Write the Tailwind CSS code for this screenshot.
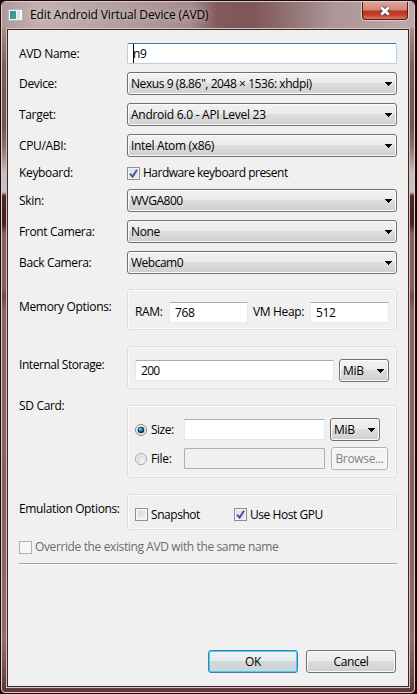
<!DOCTYPE html>
<html lang="en">
<head>
<meta charset="utf-8">
<title>Edit Android Virtual Device (AVD)</title>
<script src="https://cdn.jsdelivr.net/npm/@tailwindcss/browser@4"></script>
</head>
<body class="bg-[#0c0606] overflow-hidden">
<svg class="hidden">
  <symbol id="arrow" viewBox="0 0 7 4"><path d="M0 0h7v1H6v1H5v1H4v1H3V3H2V2H1V1H0z" fill="#000" shape-rendering="crispEdges"/></symbol>
  <symbol id="check" viewBox="0 0 9 9"><path d="M1 4.6 3.6 7.6 8 .8" fill="none" stroke="#42589b" stroke-width="2"/></symbol>
</svg>
<div class="w-[416px] h-[694px] rounded-t-[6px] rounded-b-[5px] border border-[#1c0b0b] bg-[#875f5f] overflow-hidden font-['Open_Sans','Noto_Sans',sans-serif] text-[12px] leading-4 tracking-[-0.33px] text-black whitespace-nowrap">
 <div class="h-full rounded-t-[5px] rounded-b-[4px] border border-[#dccaca] px-1 pb-1 flex flex-col bg-[linear-gradient(180deg,#b79fa0_0px,#a28a8b_30px,#7d5c5c_65px,#745452_125px,#8c7071_145px,#c9bcbc_170px,#cdc0c0_190px,#4a2524_194px,#49201f_222px,#85605f_232px,#875f5f_285px,#70494a_294px,#8a6565_310px,#875f5f_500px,#926b6b_640px,#5f3938_688px)]">
  <header class="h-[26px] -mx-1 pl-[6px] pr-[5px] flex justify-between shrink-0 bg-[linear-gradient(90deg,#b29999_0px,#c3b1b1_40px,#b39d9d_120px,#a68d8d_188px,#825a5b_215px,#805658_250px,#8e6c6d_280px,#ab9596_330px,#bda9aa_410px)]">
   <div class="flex items-start">
    <svg class="mt-[7px]" width="15" height="12" viewBox="0 0 15 12"><defs><linearGradient id="ic" x2="1" y2="1"><stop stop-color="#497fa8"/><stop offset="1" stop-color="#48a880"/></linearGradient></defs><rect x=".5" y=".5" width="14" height="11" fill="#f4f6f7" stroke="#a9b8c2"/><rect x="2" y="2" width="6" height="8" fill="url(#ic)"/><rect x="9" y="2" width="3" height="8" fill="#d9e4e1"/></svg>
    <span class="mt-[5px] ml-[7px] text-[12px] tracking-[-0.12px] [text-shadow:0_0_6px_#ffffffaa]">Edit Android Virtual Device (AVD)</span>
   </div>
   <div class="w-[48px] h-[19px] border border-t-0 border-[#e6c9c6] rounded-b-[5px]">
    <div class="h-full border border-t-0 border-[#501b18] rounded-b-[4px] flex justify-center items-center bg-[linear-gradient(180deg,#dca49a_0,#d18576_48%,#b93520_52%,#c43c25_75%,#dd7961_100%)]">
     <svg width="12" height="10" viewBox="0 0 12 10"><path d="M2.4 1.6 9.6 8.4M9.6 1.6 2.4 8.4" stroke="#4b4858" stroke-width="4.4"/><path d="M2.3 1.5 9.7 8.5M9.7 1.5 2.3 8.5" stroke="#fff" stroke-width="2.6"/></svg>
    </div>
   </div>
  </header>
  <div class="flex-1 border border-[#d5c4c4]">
   <main class="h-full border border-[#3a2424] bg-[#f0f0f0] pl-[11px] pr-[11px] pt-[13px] flex flex-col">
    <div class="flex h-[21px] items-center shrink-0"><span class="w-[108px]">AVD Name:</span><div class="w-[270px] h-[21px] rounded-[2px] border border-[#b5cfe7] border-t-[#3d7bad] bg-white pl-[5px] leading-[19px]"><span class="border-l border-black -mr-px py-px"></span><span>n9</span></div></div>
    <div class="mt-2 flex flex-col gap-2 shrink-0">
     <div class="flex h-[23px] items-center"><span class="w-[108px]">Device:</span><div class="w-[270px] h-[23px] rounded-[3px] border border-[#707070] inset-ring inset-ring-[#fcfcfc] bg-[linear-gradient(180deg,#f2f2f2_0,#ebebeb_49%,#dddddd_50%,#cfcfcf_100%)] flex items-center justify-between pl-[3px] pr-1"><span class="tracking-[-0.43px]">Nexus 9 (8.86", 2048 × 1536: xhdpi)</span><svg class="w-[7px] h-[4px]"><use href="#arrow"/></svg></div></div>
     <div class="flex h-[23px] items-center"><span class="w-[108px]">Target:</span><div class="w-[270px] h-[23px] rounded-[3px] border border-[#707070] inset-ring inset-ring-[#fcfcfc] bg-[linear-gradient(180deg,#f2f2f2_0,#ebebeb_49%,#dddddd_50%,#cfcfcf_100%)] flex items-center justify-between pl-[3px] pr-1"><span class="tracking-[-0.27px]">Android 6.0 - API Level 23</span><svg class="w-[7px] h-[4px]"><use href="#arrow"/></svg></div></div>
     <div class="flex h-[23px] items-center"><span class="w-[108px]">CPU/ABI:</span><div class="w-[270px] h-[23px] rounded-[3px] border border-[#707070] inset-ring inset-ring-[#fcfcfc] bg-[linear-gradient(180deg,#f2f2f2_0,#ebebeb_49%,#dddddd_50%,#cfcfcf_100%)] flex items-center justify-between pl-[3px] pr-1"><span>Intel Atom (x86)</span><svg class="w-[7px] h-[4px]"><use href="#arrow"/></svg></div></div>
    </div>
    <div class="mt-2 h-4 flex items-center shrink-0"><span class="w-[108px]">Keyboard:</span><div class="size-[13px] border border-[#8e8f8f] bg-[#e3e6ea] inset-ring-1 inset-ring-[#f4f4f4] grid place-items-center"><svg class="size-[9px]"><use href="#check"/></svg></div><span class="ml-[3px] tracking-[-0.5px]">Hardware keyboard present</span></div>
    <div class="mt-2 flex flex-col gap-2 shrink-0">
     <div class="flex h-[23px] items-center"><span class="w-[108px]">Skin:</span><div class="w-[270px] h-[23px] rounded-[3px] border border-[#707070] inset-ring inset-ring-[#fcfcfc] bg-[linear-gradient(180deg,#f2f2f2_0,#ebebeb_49%,#dddddd_50%,#cfcfcf_100%)] flex items-center justify-between pl-[3px] pr-1"><span class="tracking-[-0.5px]">WVGA800</span><svg class="w-[7px] h-[4px]"><use href="#arrow"/></svg></div></div>
     <div class="flex h-[23px] items-center"><span class="w-[108px]">Front Camera:</span><div class="w-[270px] h-[23px] rounded-[3px] border border-[#707070] inset-ring inset-ring-[#fcfcfc] bg-[linear-gradient(180deg,#f2f2f2_0,#ebebeb_49%,#dddddd_50%,#cfcfcf_100%)] flex items-center justify-between pl-[3px] pr-1"><span>None</span><svg class="w-[7px] h-[4px]"><use href="#arrow"/></svg></div></div>
     <div class="flex h-[23px] items-center"><span class="w-[108px]">Back Camera:</span><div class="w-[270px] h-[23px] rounded-[3px] border border-[#707070] inset-ring inset-ring-[#fcfcfc] bg-[linear-gradient(180deg,#f2f2f2_0,#ebebeb_49%,#dddddd_50%,#cfcfcf_100%)] flex items-center justify-between pl-[3px] pr-1"><span class="tracking-[-0.5px]">Webcam0</span><svg class="w-[7px] h-[4px]"><use href="#arrow"/></svg></div></div>
    </div>
    <div class="mt-[15px] flex shrink-0"><span class="w-[108px] mt-[10px]">Memory Options:</span>
     <div class="w-[270px] h-[41px] rounded-[3px] border border-[#d5dfe5] inset-ring inset-ring-white/80 flex items-center pl-[7px] pt-[5px]">
      <span class="w-[34px]">RAM:</span><div class="w-[79px] h-[21px] border border-[#e3e9ef] border-t-[#abadb3] bg-white pl-[5px] leading-[19px]">768</div><span class="ml-[5px] w-[57px]">VM Heap:</span><div class="w-[79px] h-[21px] border border-[#e3e9ef] border-t-[#abadb3] bg-white pl-[5px] leading-[19px]">512</div>
     </div></div>
    <div class="mt-4 flex shrink-0"><span class="w-[108px] mt-[11px] tracking-[-0.45px]">Internal Storage:</span>
     <div class="w-[270px] h-[43px] rounded-[3px] border border-[#d5dfe5] inset-ring inset-ring-white/80 flex items-center pl-[7px] pt-[6px] gap-[5px]">
      <div class="w-[199px] h-[21px] border border-[#e3e9ef] border-t-[#abadb3] bg-white pl-[5px] leading-[19px] tracking-[-0.7px]">200</div>
      <div class="w-[50px] h-[23px] rounded-[3px] border border-[#707070] inset-ring inset-ring-[#fcfcfc] bg-[linear-gradient(180deg,#f2f2f2_0,#ebebeb_49%,#dddddd_50%,#cfcfcf_100%)] flex items-center justify-between pl-[3px] pr-1"><span>MiB</span><svg class="w-[7px] h-[4px]"><use href="#arrow"/></svg></div>
     </div></div>
    <div class="mt-[9px] flex shrink-0"><span class="w-[108px]">SD Card:</span>
     <div class="mt-[7px] w-[270px] h-[73px] rounded-[3px] border border-[#d5dfe5] inset-ring inset-ring-white/80 pl-[7px] pt-[12px] flex flex-col gap-[6px]">
      <div class="h-[23px] flex items-center"><svg width="12" height="12" viewBox="0 0 12 12"><circle cx="6" cy="6" r="5.5" fill="#f4f4f4" stroke="#85888a"/><circle cx="6" cy="6" r="4" fill="#d9dee3"/><circle cx="6" cy="6" r="3.3" fill="#163c5c"/><circle cx="5.7" cy="5.6" r="2" fill="#2d8cc4"/><circle cx="5" cy="4.9" r=".9" fill="#b4e4f8"/></svg><span class="ml-1 w-[33px] tracking-[-0.5px]">Size:</span><div class="w-[141px] h-[21px] border border-[#e3e9ef] border-t-[#abadb3] bg-white"></div>
       <div class="ml-[5px] w-[50px] h-[23px] rounded-[3px] border border-[#707070] inset-ring inset-ring-[#fcfcfc] bg-[linear-gradient(180deg,#f2f2f2_0,#ebebeb_49%,#dddddd_50%,#cfcfcf_100%)] flex items-center justify-between pl-[3px] pr-1"><span>MiB</span><svg class="w-[7px] h-[4px]"><use href="#arrow"/></svg></div></div>
      <div class="h-[23px] flex items-center"><svg width="12" height="12" viewBox="0 0 12 12"><circle cx="6" cy="6" r="5.5" fill="#f4f4f4" stroke="#a0a2a4"/><circle cx="6" cy="6" r="3.8" fill="#dcdcdc"/><circle cx="6.8" cy="6.8" r="2.6" fill="#ededed"/></svg><span class="ml-1 w-[33px]">File:</span><div class="w-[141px] h-[21px] border border-[#afafaf] rounded-[1px] bg-[#f0f0f0]"></div>
       <div class="ml-[6px] w-[57px] h-[23px] rounded-[3px] border border-[#adb2b5] inset-ring inset-ring-[#fcfcfc] bg-[#f4f4f4] text-[#838383] text-center leading-[21px]">Browse...</div></div>
     </div></div>
    <div class="mt-4 flex shrink-0"><span class="w-[108px] mt-[7px] tracking-[-0.37px]">Emulation Options:</span>
     <div class="w-[270px] h-[36px] rounded-[3px] border border-[#d5dfe5] inset-ring inset-ring-white/80 flex items-center pl-[7px] pt-[5px]">
      <div class="size-[13px] border border-[#8e8f8f] bg-[linear-gradient(135deg,#cbcfd5,#f6f6f6)] inset-ring-2 inset-ring-[#f4f4f4]"></div><span class="ml-[3px] w-[83px] tracking-[-0.45px]">Snapshot</span>
      <div class="size-[13px] border border-[#8e8f8f] bg-[#e3e6ea] inset-ring-1 inset-ring-[#f4f4f4] grid place-items-center"><svg class="size-[9px]"><use href="#check"/></svg></div><span class="ml-[3px] tracking-[-0.45px]">Use Host GPU</span>
     </div></div>
    <div class="mt-[9px] h-4 flex items-center text-[#6d6d6d] shrink-0"><div class="size-[13px] border border-[#b1b1b1] bg-[#f6f6f6]"></div><span class="ml-[3px] tracking-[-0.38px]">Override the existing AVD with the same name</span></div>
    <div class="mt-2 h-[2px] bg-[#a0a0a0] border-b border-white shrink-0"></div>
    <div class="mt-[85px] mr-px flex justify-end gap-2 shrink-0 text-center leading-[21px]">
     <div class="w-[90px] h-[23px] rounded-[3px] border border-[#3c7fb1] inset-ring inset-ring-[#45d1f7] bg-[linear-gradient(180deg,#f0f2f3_0,#e6ebed_49%,#d3dadd_50%,#ccd3d7_100%)]">OK</div>
     <div class="w-[90px] h-[23px] rounded-[3px] border border-[#707070] inset-ring inset-ring-[#fcfcfc] bg-[linear-gradient(180deg,#f2f2f2_0,#ebebeb_49%,#dddddd_50%,#cfcfcf_100%)]">Cancel</div>
    </div>
   </main>
  </div>
 </div>
</div>
</body>
</html>
